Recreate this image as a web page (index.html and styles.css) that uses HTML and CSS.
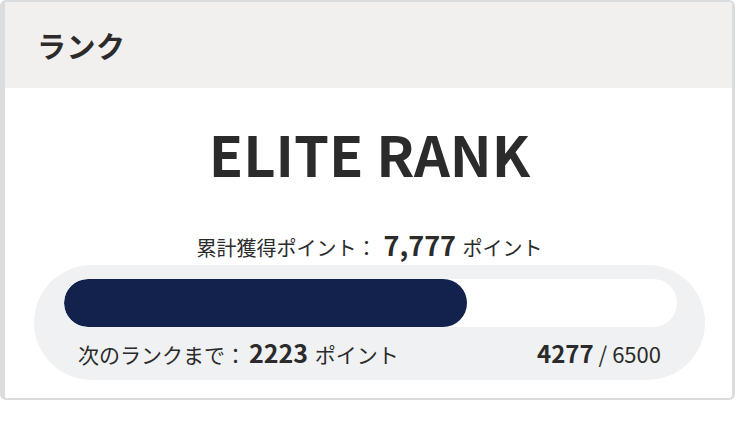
FILE: index.html
```html
<!DOCTYPE html>
<html lang="ja">
<head>
<meta charset="utf-8">
<link rel="stylesheet" href="styles.css">
</head>
<body>
<div class="card">
  <div class="card-header"><h2 class="card-title">ランク</h2></div>
  <div class="card-body">
    <div class="rank-name">ELITE RANK</div>
    <div class="total">累計獲得ポイント：<span class="total-num">7,777</span> ポイント</div>
    <div class="track">
      <div class="bar"><div class="bar-fill" style="width: 65.8%"></div></div>
      <div class="track-info">
        <div class="next">次のランクまで：<span class="next-num">2223</span> ポイント</div>
        <div class="ratio"><span class="ratio-cur">4277</span> / 6500</div>
      </div>
    </div>
  </div>
</div>
</body>
</html>
```
FILE: styles.css
```css
html, body {
  margin: 0;
  padding: 0;
  background: #ffffff;
}
body {
  font-family: "Noto Sans CJK JP", "Noto Sans", sans-serif;
  color: #2b2b2b;
}
.card {
  width: 735px;
  height: 400px;
  box-sizing: border-box;
  border-style: solid;
  border-color: #dadcdd;
  border-width: 2px 3px 2px 5px;
  border-radius: 6px;
  background: #ffffff;
  overflow: hidden;
  display: flex;
  flex-direction: column;
}
.card-header {
  height: 86px;
  background: #f1f0ef;
  display: flex;
  align-items: center;
  padding-left: 32px;
  flex: none;
}
.card-title {
  margin: 0;
  font-size: 29px;
  font-weight: 700;
  line-height: 1;
  letter-spacing: 0.5px;
}
.card-body {
  padding: 0 27px 0 29px;
  display: flex;
  flex-direction: column;
  align-items: stretch;
}
.rank-name {
  margin-top: 32px;
  text-align: center;
  font-size: 56px;
  font-weight: 700;
  line-height: 66px;
}
.total {
  margin-top: 44px;
  text-align: center;
  font-size: 20px;
  line-height: 30px;
}
.total-num {
  font-size: 27px;
  font-weight: 700;
  margin: 0 2px 0 7px;
}
.track {
  margin-top: 2px;
  background: #f0f1f2;
  border-radius: 58px;
  padding: 14px 28px 0 30px;
  height: 115px;
  box-sizing: border-box;
  flex: none;
}
.bar {
  height: 48px;
  background: #ffffff;
  border-radius: 24px;
  overflow: hidden;
}
.bar-fill {
  height: 100%;
  background: #13224d;
  border-radius: 24px;
}
.track-info {
  display: flex;
  justify-content: space-between;
  align-items: baseline;
  padding: 8px 16px 0 14px;
  font-size: 21px;
  line-height: 34px;
}
.next-num {
  font-size: 25px;
  font-weight: 700;
  margin: 0 2px 0 3px;
}
.ratio {
  font-size: 22px;
}
.ratio-cur {
  font-size: 24px;
  font-weight: 700;
}
```
